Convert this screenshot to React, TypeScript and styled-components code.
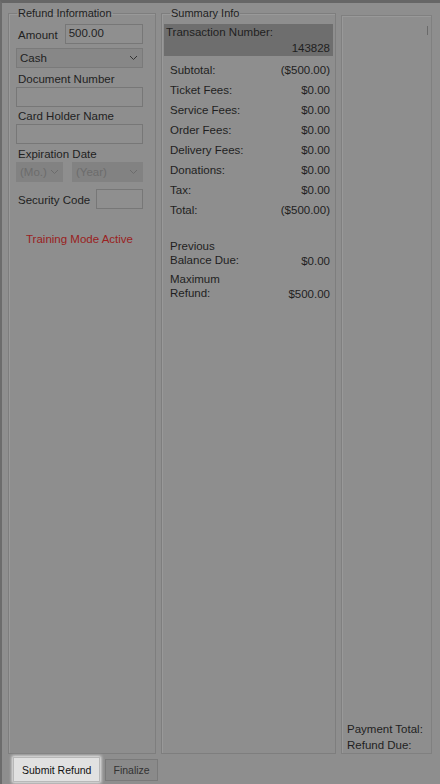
import styled, { createGlobalStyle } from 'styled-components';

const GlobalStyle = createGlobalStyle`
  html, body {
    margin: 0;
    padding: 0;
    background: #8e8e8e;
  }
  body {
    font-family: 'Liberation Sans', Arial, sans-serif;
    font-size: 11.5px;
    color: #1f1f1f;
  }
`;

const Window = styled.div`
  width: 440px;
  height: 784px;
  box-sizing: border-box;
  border-top: 3px solid #666;
  border-left: 2px solid #6c6c6c;
  display: flex;
  flex-direction: column;
  overflow: hidden;
`;

const Columns = styled.div`
  flex: 1;
  display: flex;
  gap: 5px;
  padding: 4px 8px 0 6px;
`;

const Group = styled.fieldset<{ $w: number; $pr: number }>`
  width: ${(p) => p.$w}px;
  box-sizing: border-box;
  margin: 0;
  padding: 5px ${(p) => p.$pr}px 8px 7px;
  border: 1px solid #7e7e7e;
  box-shadow: inset 1px 1px 0 #999;
  display: flex;
  flex-direction: column;
  min-width: 0;
`;

const Legend = styled.legend`
  padding: 0 1px;
  margin-left: 1px;
  font-size: 11px;
`;

const Field = styled.div<{ $mb?: number }>`
  display: flex;
  flex-direction: column;
  gap: 1px;
  margin-bottom: ${(p) => p.$mb ?? 3}px;
`;

const Row = styled.div<{ $gap?: number; $spread?: boolean; $mb?: number }>`
  display: flex;
  align-items: center;
  gap: ${(p) => p.$gap ?? 6}px;
  justify-content: ${(p) => (p.$spread ? 'space-between' : 'flex-start')};
  margin-bottom: ${(p) => p.$mb ?? 0}px;
`;

const Label = styled.span<{ $drop?: number }>`
  line-height: 13px;
  padding-left: 2px;
  margin-top: ${(p) => p.$drop ?? 0}px;
  white-space: nowrap;
`;

const Input = styled.div<{ $w?: number }>`
  box-sizing: border-box;
  height: 20px;
  width: ${(p) => (p.$w ? `${p.$w}px` : '100%')};
  border: 1px solid #777;
  background: #8f8f8f;
  padding: 2px 3px;
`;

const Select = styled.div<{ $w?: number; $off?: boolean }>`
  box-sizing: border-box;
  height: 20px;
  width: ${(p) => (p.$w ? `${p.$w}px` : '100%')};
  border: 1px solid ${(p) => (p.$off ? '#828282' : '#7a7a7a')};
  background: ${(p) => (p.$off ? '#828282' : '#878787')};
  color: ${(p) => (p.$off ? '#6c6c6c' : '#1f1f1f')};
  display: flex;
  align-items: center;
  justify-content: space-between;
  gap: 3px;
  padding: 0 4px 0 3px;
`;

const Chevron = ({ c }: { c: string }) => (
  <svg width="9" height="6" viewBox="0 0 9 6" style={{ flexShrink: 0 }}>
    <path d="M1 1 L4.5 4.5 L8 1" fill="none" stroke={c} strokeWidth="1" />
  </svg>
);

const Training = styled.div`
  color: #9a2121;
  text-align: center;
  margin-top: 24px;
`;

const TxnBox = styled.div`
  background: #6e6e6e;
  margin: 0 -3px 0 -5px;
  padding: 1px 3px 1px 2px;
  display: flex;
  flex-direction: column;
  line-height: 14px;
`;

const TxnValue = styled.span`
  align-self: flex-end;
  margin-top: 2px;
`;

const SumRow = styled.div<{ $top?: number }>`
  display: flex;
  justify-content: space-between;
  align-items: flex-end;
  min-height: 20px;
  padding: 0 0 0 1px;
  margin-top: ${(p) => p.$top ?? 0}px;
`;

const Stack = styled.span`
  display: flex;
  flex-direction: column;
  line-height: 14px;
`;

const SideBox = styled.div`
  flex: 1;
  border: 1px solid #808080;
  box-shadow: inset 1px 1px 0 #999;
  margin-top: 8px;
  display: flex;
  flex-direction: column;
  padding: 0 5px 0;
  line-height: 16px;
  white-space: nowrap;
`;

const Tick = styled.div`
  align-self: flex-end;
  width: 1px;
  height: 9px;
  margin: 10px -2px auto 0;
  background: #6a6a6a;
`;

const Bottom = styled.div`
  height: 30px;
  box-sizing: border-box;
  display: flex;
  align-items: flex-end;
  gap: 5px;
  padding: 0 0 2px 11px;
`;

const Button = styled.button<{ $primary?: boolean }>`
  font-family: inherit;
  font-size: 10.5px;
  height: ${(p) => (p.$primary ? 25 : 22)}px;
  margin-bottom: ${(p) => (p.$primary ? 0 : 1)}px;
  padding: 0 ${(p) => (p.$primary ? 8 : 7)}px;
  color: ${(p) => (p.$primary ? '#111' : '#333')};
  background: ${(p) => (p.$primary ? '#e1e1e1' : '#8a8a8a')};
  border: 1px solid ${(p) => (p.$primary ? '#b8b8b8' : '#7a7a7a')};
  box-shadow: ${(p) => (p.$primary ? '0 0 3px 1px #f4f4f4' : 'none')};
  border-radius: 0;
`;

const summary: [string, string][] = [
  ['Subtotal:', '($500.00)'],
  ['Ticket Fees:', '$0.00'],
  ['Service Fees:', '$0.00'],
  ['Order Fees:', '$0.00'],
  ['Delivery Fees:', '$0.00'],
  ['Donations:', '$0.00'],
  ['Tax:', '$0.00'],
  ['Total:', '($500.00)'],
];

export default function App() {
  return (
    <Window>
      <GlobalStyle />
      <Columns>
        <Group $w={148} $pr={12}>
          <Legend>Refund Information</Legend>
          <Row $mb={4} $gap={7}>
            <Label $drop={3}>Amount</Label>
            <Input $w={80}>500.00</Input>
          </Row>
          <Field $mb={5}>
            <Select>
              Cash <Chevron c="#333" />
            </Select>
          </Field>
          <Field>
            <Label>Document Number</Label>
            <Input />
          </Field>
          <Field $mb={4}>
            <Label>Card Holder Name</Label>
            <Input />
          </Field>
          <Field $mb={7}>
            <Label>Expiration Date</Label>
            <Row $gap={9}>
              <Select $w={47} $off>
                (Mo.) <Chevron c="#6c6c6c" />
              </Select>
              <Select $w={71} $off>
                (Year) <Chevron c="#6c6c6c" />
              </Select>
            </Row>
          </Field>
          <Row $spread>
            <Label $drop={2}>Security Code</Label>
            <Input $w={47} />
          </Row>
          <Training>Training Mode Active</Training>
        </Group>
        <Group $w={175} $pr={5}>
          <Legend>Summary Info</Legend>
          <TxnBox>
            <span>Transaction Number:</span>
            <TxnValue>143828</TxnValue>
          </TxnBox>
          {summary.map(([k, v]) => (
            <SumRow key={k}>
              <span>{k}</span>
              <span>{v}</span>
            </SumRow>
          ))}
          <SumRow $top={23}>
            <Stack>
              <span>Previous</span>
              <span>Balance Due:</span>
            </Stack>
            <span>$0.00</span>
          </SumRow>
          <SumRow $top={5}>
            <Stack>
              <span>Maximum</span>
              <span>Refund:</span>
            </Stack>
            <span>$500.00</span>
          </SumRow>
        </Group>
        <SideBox>
          <Tick />
          <span>Payment Total:</span>
          <span>Refund Due:</span>
        </SideBox>
      </Columns>
      <Bottom>
        <Button $primary>Submit Refund</Button>
        <Button>Finalize</Button>
      </Bottom>
    </Window>
  );
}
